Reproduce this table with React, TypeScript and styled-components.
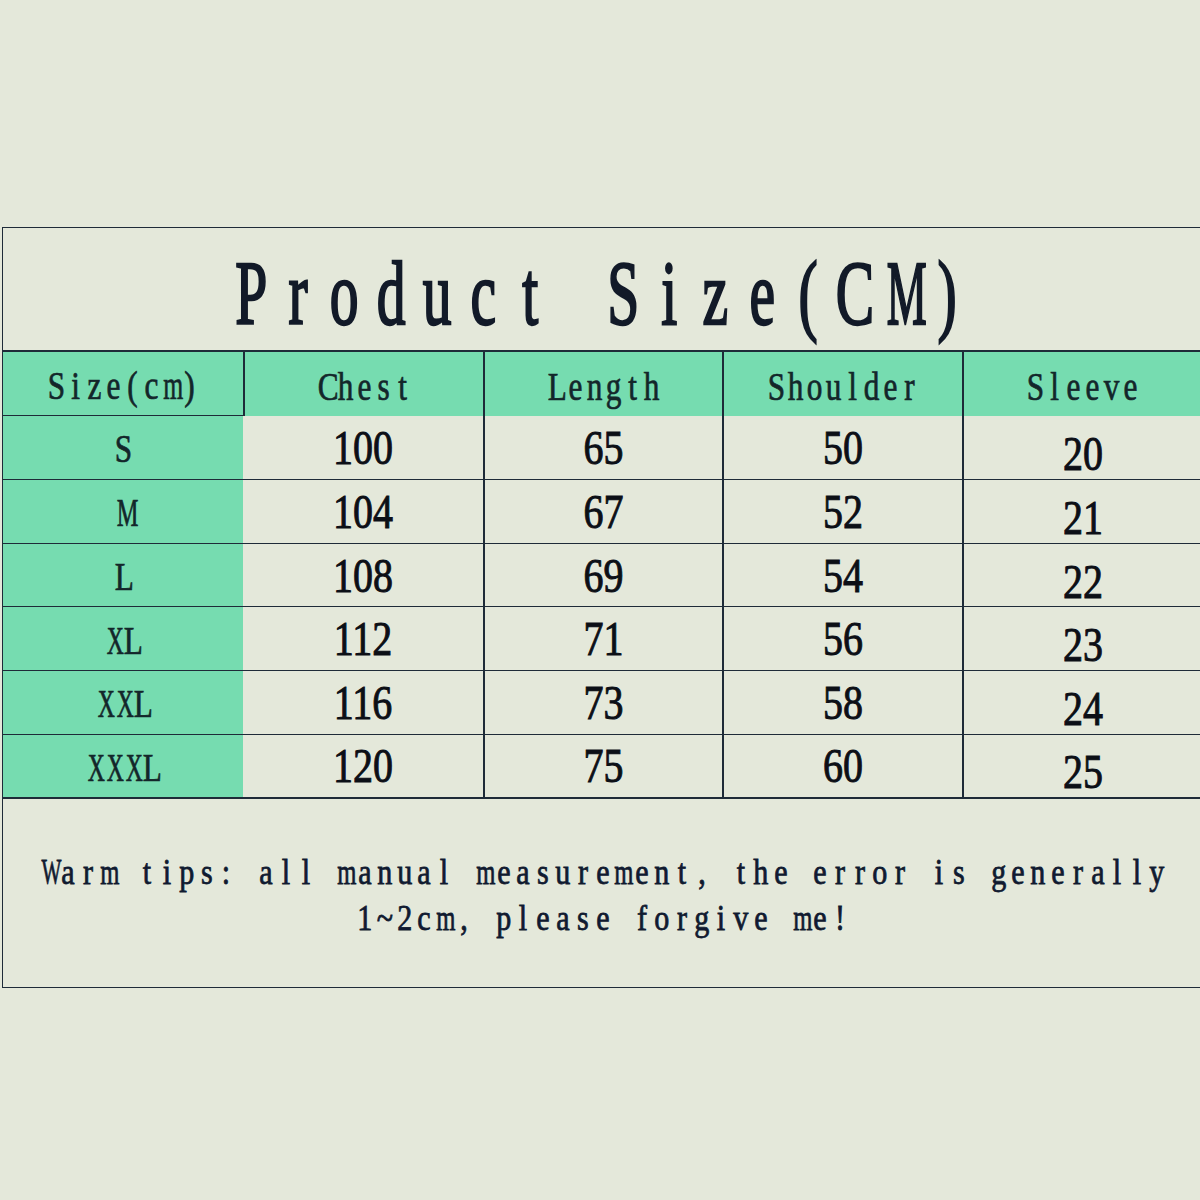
import React from 'react';
import styled, { createGlobalStyle } from 'styled-components';

const GlobalStyle = createGlobalStyle`
    html, body {
        margin: 0;
        padding: 0;
        background: #e4e8da;
    }
`;

type Tone = 'green' | 'plain';
type Kind = 'head' | 'label' | 'num';

// the sheet uses a half-width serif mono face, so every glyph gets a fixed cell
interface MonoFace {
    cell: number;
    size: number;
    sx: number;
    sy: number;
    stroke: number;
}

const TITLE_FACE: MonoFace = { cell: 46.4, size: 72, sx: 0.8, sy: 1.27, stroke: 1.9 };
const CELL_FACE: MonoFace = { cell: 19, size: 34, sx: 0.92, sy: 1.16, stroke: 0.6 };
const TIP_FACE: MonoFace = { cell: 19.8, size: 32, sx: 0.94, sy: 1.1, stroke: 0.7 };

// wide serif letters are squeezed a bit more so they stay inside their cell
const NARROW: Record<string, number> = { W: 0.7, M: 0.78, X: 0.76, m: 0.82, w: 0.8 };

const columns = ['Chest', 'Length', 'Shoulder', 'Sleeve'];

const rows: { size: string; values: number[] }[] = [
    { size: 'S', values: [100, 65, 50, 20] },
    { size: 'M', values: [104, 67, 52, 21] },
    { size: 'L', values: [108, 69, 54, 22] },
    { size: 'XL', values: [112, 71, 56, 23] },
    { size: 'XXL', values: [116, 73, 58, 24] },
    { size: 'XXXL', values: [120, 75, 60, 25] },
];

const LINE = '#1e2b38';
const GREEN = '#76dcb0';
const INK = '#121a28';

const MonoText: React.FC<{ text: string; face: MonoFace }> = ({ text, face }) => (
    <MonoLine>
        {Array.from(text).map((ch, i) => (
            <Glyph key={i} $face={face} $squeeze={NARROW[ch] ?? 1}>
                {ch === ' ' ? '\u00a0' : ch}
            </Glyph>
        ))}
    </MonoLine>
);

export default function App() {
    return (
        <>
            <GlobalStyle />
            <Page>
                <Frame>
                    <TitleBar>
                        <MonoText text="Product Size(CM)" face={TITLE_FACE} />
                    </TitleBar>
                    <Grid>
                        <Cell $tone="green" $kind="head" $bottom>
                            <MonoText text="Size(cm)" face={CELL_FACE} />
                        </Cell>
                        {columns.map(c => (
                            <Cell key={c} $tone="green" $kind="head" $left>
                                <MonoText text={c} face={CELL_FACE} />
                            </Cell>
                        ))}
                        {rows.map((r, ri) => (
                            <React.Fragment key={r.size}>
                                <Cell $tone="green" $kind="label" $top={ri > 0} $shift={2}>
                                    <MonoText text={r.size} face={CELL_FACE} />
                                </Cell>
                                {r.values.map((v, ci) => (
                                    <Cell
                                        key={ci}
                                        $tone="plain"
                                        $kind="num"
                                        $top={ri > 0}
                                        $left={ci > 0}
                                        $shift={ci === 3 ? 6 : 0}
                                    >
                                        <Digits>{v}</Digits>
                                    </Cell>
                                ))}
                            </React.Fragment>
                        ))}
                    </Grid>
                    <Footer>
                        <MonoText
                            text="Warm tips: all manual measurement, the error is generally"
                            face={TIP_FACE}
                        />
                        <MonoText text="1~2cm, please forgive me!" face={TIP_FACE} />
                    </Footer>
                </Frame>
            </Page>
        </>
    );
}

const Page = styled.div`
    width: 1200px;
    height: 1200px;
    overflow: hidden;
    background: #e4e8da;
    padding-top: 227px;
    padding-left: 2px;
    box-sizing: border-box;
`;

const Frame = styled.div`
    width: 1200px;
    border: 1.5px solid ${LINE};
    border-right: none;
    box-sizing: border-box;
    background: #e4e8da;
`;

const TitleBar = styled.div`
    height: 124px;
    display: flex;
    align-items: center;
    justify-content: center;
    padding-top: 10px;
    padding-right: 6px;
    box-sizing: border-box;
    border-bottom: 2px solid ${LINE};
    color: ${INK};
`;

const MonoLine = styled.span`
    display: inline-flex;
    white-space: pre;
`;

const Glyph = styled.span<{ $face: MonoFace; $squeeze: number }>`
    display: inline-block;
    width: ${p => p.$face.cell}px;
    text-align: center;
    font-family: 'Liberation Serif', 'Times New Roman', serif;
    font-size: ${p => p.$face.size}px;
    line-height: 1;
    transform: scale(${p => p.$face.sx * p.$squeeze}, ${p => p.$face.sy});
    -webkit-text-stroke: ${p => p.$face.stroke}px currentColor;
`;

const Grid = styled.div`
    display: grid;
    grid-template-columns: 240px 240px 239px 240px 1fr;
    grid-auto-rows: 63.6px;
    border-bottom: 2px solid ${LINE};
`;

const Cell = styled.div<{
    $tone: Tone;
    $kind: Kind;
    $left?: boolean;
    $top?: boolean;
    $bottom?: boolean;
    $shift?: number;
}>`
    display: flex;
    align-items: center;
    justify-content: center;
    box-sizing: border-box;
    background: ${p => (p.$tone === 'green' ? GREEN : 'transparent')};
    ${p => p.$left && `border-left: 2px solid ${LINE};`}
    ${p => p.$top && `border-top: 1.5px solid ${LINE};`}
    ${p => p.$bottom && `border-bottom: 1.5px solid ${LINE};`}
    padding-top: ${p => (p.$shift || 0) * 2 + (p.$kind === 'head' ? 6 : 0)}px;
    color: ${p => (p.$kind === 'num' ? '#0c0f16' : '#13262a')};
`;

const Digits = styled.span`
    display: inline-block;
    font-family: 'Liberation Serif', 'Times New Roman', serif;
    font-size: 40px;
    transform: scaleY(1.22);
    -webkit-text-stroke: 0.8px currentColor;
`;

const Footer = styled.div`
    height: 188px;
    display: flex;
    flex-direction: column;
    align-items: center;
    justify-content: center;
    gap: 14px;
    padding-top: 4px;
    box-sizing: border-box;
    color: #101a30;
`;
